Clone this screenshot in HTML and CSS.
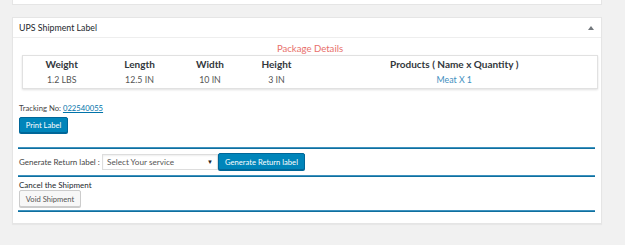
FILE: index.html
```html
<!DOCTYPE html>
<html>
<head>
<meta charset="utf-8">
<link rel="stylesheet" href="styles.css">
</head>
<body>
<div class="topbox"></div>
<div class="postbox">
  <div class="postbox-head">
    <span class="title">UPS Shipment Label</span>
    <span class="toggle"></span>
  </div>
  <div class="inside">
    <div class="caption">Package Details</div>
    <table class="pkg">
      <tr>
        <th class="c1">Weight</th>
        <th class="c2">Length</th>
        <th class="c3">Width</th>
        <th class="c4">Height</th>
        <th class="c5">Products ( Name x Quantity )</th>
      </tr>
      <tr>
        <td>1.2 LBS</td>
        <td>12.5 IN</td>
        <td>10 IN</td>
        <td>3 IN</td>
        <td><a class="prod" href="#">Meat X 1</a></td>
      </tr>
    </table>
    <div class="tracking">Tracking No: <a href="#">022540055</a></div>
    <button class="btn primary print">Print Label</button>
    <div class="rule first"></div>
    <div class="return-row">
      <span class="lbl">Generate Return label :</span>
      <div class="select"><span>Select Your service</span><span class="caret">▼</span></div>
      <button class="btn primary gen">Generate Return label</button>
    </div>
    <div class="rule second"></div>
    <div class="cancel">Cancel the Shipment</div>
    <button class="btn secondary void">Void Shipment</button>
    <div class="rule third"></div>
  </div>
</div>
</body>
</html>
```

FILE: styles.css
```css
* { box-sizing: border-box; }
html, body { margin: 0; padding: 0; }
body {
  background: #f1f1f1;
  font-family: Lato, "Liberation Sans", sans-serif;
  font-size: 9px;
  color: #444;
  width: 625px;
  height: 245px;
  overflow: hidden;
  white-space: nowrap;
}
.topbox {
  margin-left: 12px;
  width: 590px;
  height: 5px;
  background: #fff;
  border: 1px solid #e5e5e5;
  border-top: none;
}
.postbox {
  margin: 12px 0 0 12px;
  width: 590px;
  height: 207px;
  background: #fff;
  border: 1px solid #e5e5e5;
  box-shadow: 0 1px 1px rgba(0,0,0,.04);
}
.postbox-head {
  height: 20px;
  border-bottom: 1px solid #eee;
  display: flex;
  align-items: center;
  justify-content: space-between;
  padding: 0 7px 0 6px;
}
.title { color: #23282d; font-size: 8.8px; }
.toggle {
  width: 0; height: 0;
  border-left: 3px solid transparent;
  border-right: 3px solid transparent;
  border-bottom: 4px solid #72777c;
}
.inside { padding: 0 6px 0 5px; }
.caption {
  color: #e8706b;
  text-align: center;
  margin: 4px 0 0 4px;
  width: 576px;
  height: 13px;
  line-height: 13px;
  font-size: 9.6px;
}
.pkg {
  margin-left: 4px;
  width: 576px;
  border-collapse: collapse;
  border: 1px solid #e1e1e1;
  box-shadow: 0 1px 2px rgba(0,0,0,.12);
  table-layout: fixed;
}
.pkg th, .pkg td {
  text-align: center;
  padding: 0;
  height: 16px;
  line-height: 16px;
}
.pkg th { color: #32373c; font-weight: bold; font-size: 10px; }
.pkg td { color: #555; font-size: 8.8px; }
.c1 { width: 78px; }
.c2 { width: 78px; }
.c3 { width: 63px; }
.c4 { width: 70px; }
.prod { color: #3f8fc0; text-decoration: none; }
.tracking {
  margin: 13px 0 0 1px;
  height: 12px;
  line-height: 12px;
  color: #444;
  font-size: 7.7px;
}
.tracking a { color: #0073aa; }
.btn {
  font-family: inherit;
  font-size: 7.6px;
  border-radius: 2px;
  padding: 0;
  cursor: pointer;
  white-space: nowrap;
}
.primary {
  background: #0085ba;
  border: 1px solid #006799;
  color: #fff;
  box-shadow: 0 1px 0 #006799;
}
.secondary {
  background: #f7f7f7;
  border: 1px solid #ccc;
  color: #555;
  box-shadow: 0 1px 0 #ccc;
}
.print {
  display: block;
  margin: 3px 0 0 1px;
  width: 49px;
  height: 16px;
}
.rule {
  height: 2px;
  border-top: 1px solid #3d93bf;
  border-bottom: 1px solid #0f6f9e;
}
.rule.first { margin-top: 14px; }
.return-row {
  display: flex;
  align-items: center;
  height: 17px;
  margin-top: 4px;
  padding-left: 1px;
}
.lbl { color: #444; font-size: 8px; width: 83px; }
.select {
  width: 116px;
  height: 16px;
  border: 1px solid #ddd;
  box-shadow: inset 0 1px 2px rgba(0,0,0,.07);
  display: flex;
  align-items: center;
  justify-content: space-between;
  padding: 0 4px 0 4px;
  color: #555;
  font-size: 8.2px;
}
.caret { font-size: 6px; color: #222; }
.gen {
  height: 17px;
  width: 87px;
}
.rule.second { margin-top: 5px; }
.cancel {
  margin: 3px 0 0 1px;
  height: 10px;
  line-height: 10px;
  color: #23282d;
  font-size: 8px;
}
.void {
  display: block;
  margin: 0 0 0 1px;
  width: 62px;
  height: 17px;
}
.rule.third { margin-top: 3px; }
```
